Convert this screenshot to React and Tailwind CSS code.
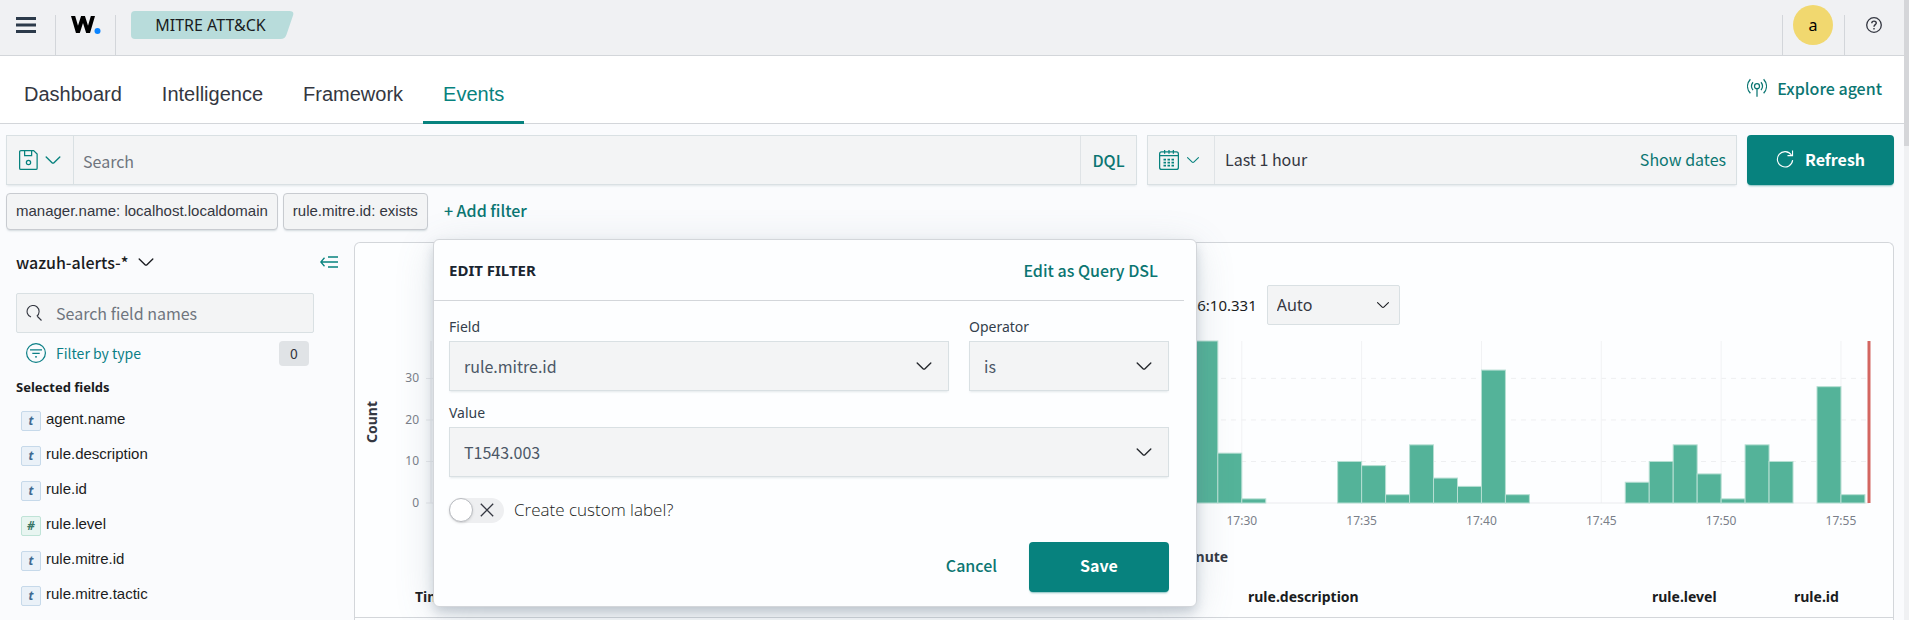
import React, { useState } from "react";

const source = "font-['Noto_Sans_CJK_SC',sans-serif]";

function Icon({ className = "size-5", children, viewBox = "0 0 16 16" }) {
  return (
    <svg viewBox={viewBox} className={`shrink-0 ${className}`} fill="none" stroke="currentColor" aria-hidden="true">
      {children}
    </svg>
  );
}

function Chevron({ className = "size-5" }) {
  return (
    <Icon className={className}>
      <path
        stroke="none"
        fill="currentColor"
        d="M13.069 5.157 8.384 9.768a.546.546 0 0 1-.768 0L2.93 5.158a.552.552 0 0 0-.771 0 .53.53 0 0 0 0 .759l4.684 4.61c.641.631 1.672.63 2.312 0l4.684-4.61a.53.53 0 0 0 0-.76.552.552 0 0 0-.771 0z"
      />
    </Icon>
  );
}

function SaveIcon() {
  return (
    <Icon>
      <path d="M1.5.5h10.2l2.8 2.8v11.2a1 1 0 0 1-1 1h-12a1 1 0 0 1-1-1v-13a1 1 0 0 1 1-1z" />
      <path d="M4.5.5v4h5.6v-4" />
      <circle cx="7.6" cy="10" r="1.7" />
    </Icon>
  );
}

function CalendarIcon() {
  return (
    <Icon>
      <rect x=".5" y="1.5" width="15" height="14" rx="1.6" />
      <path d="M.5 4.500h15M4.500 0v3M8 0v3M11.500 0v3" />
      <path strokeWidth="1.3" strokeDasharray="2 1.2" d="M3.6 7.700h9M3.600 10.100h9M3.600 12.500h9" />
    </Icon>
  );
}

function AgentIcon() {
  return (
    <Icon>
      <circle cx="8" cy="6.5" r="2" />
      <path d="M8 8.500V15" />
      <path d="M4.800 3.400c-1.500 1.900-1.500 4.400 0 6.300M11.200 3.400c1.500 1.900 1.500 4.400 0 6.300" />
      <path d="M2.700 1C-.3 4.400-.3 8.800 2.700 12.200M13.300 1c3 3.400 3 7.800 0 11.200" />
    </Icon>
  );
}

function SelectBox({ id, value }) {
  return (
    <div className="grid items-center">
      <select
        id={id}
        defaultValue={value}
        className={`col-start-1 row-start-1 h-[50px] w-full appearance-none border border-[#d9e0e3] bg-[#f3f4f5] px-[14px] text-base text-[#4b5766] shadow-[0_2px_2px_-1px_rgba(120,140,150,0.2)] ${source}`}
      >
        <option>{value}</option>
      </select>
      <Chevron className="pointer-events-none col-start-1 row-start-1 mr-[15px] size-5 justify-self-end text-[#25282d]" />
    </div>
  );
}

const fields = [
  ["t", "agent.name"],
  ["t", "rule.description"],
  ["t", "rule.id"],
  ["#", "rule.level"],
  ["t", "rule.mitre.id"],
  ["t", "rule.mitre.tactic"],
];

const SPAN = 60;
const START = -3.83;
const TOP = 39;
const bars = [
  [28, 39], [29, 12], [30, 1], [34, 10], [35, 9], [36, 2], [37, 14], [38, 6], [39, 4], [40, 32], [41, 2],
  [46, 5], [47, 10], [48, 14], [49, 7], [50, 1], [51, 14], [52, 10], [54, 28], [55, 2],
];
const gridMinutes = [0, 5, 10, 15, 20, 25, 30, 35, 40, 45, 50, 55];
const labelMinutes = [30, 35, 40, 45, 50, 55];
const at = (m) => `${((m - START) / SPAN) * 100}%`;
const level = (v) => 162 - (v / TOP) * 162;

function Histogram() {
  return (
    <svg className="block h-[190px] w-full overflow-visible font-['Noto_Sans',sans-serif] text-xs" role="img" aria-label="Count per minute">
      {[10, 20, 30].map((v) => (
        <line key={v} x1="0" x2="100%" y1={level(v)} y2={level(v)} stroke="#eeeff1" strokeDasharray="5 5" />
      ))}
      {gridMinutes.map((m) => (
        <line key={m} x1={at(m)} x2={at(m)} y1="0" y2="162" stroke="#f1f2f4" />
      ))}
      <path d="M0 0V162M-5 162H0M-5 120.500H0M-5 79H0M-5 37.500H0" stroke="#eaebee" />
      <line x1="0" x2="100%" y1="162" y2="162" stroke="#eaebee" />
      {bars.map(([m, v]) => (
        <rect key={m} x={at(m)} y={level(v)} width={`${100 / SPAN}%`} height={162 - level(v)} fill="#54b399" stroke="#b7dfd3" />
      ))}
      <line x1="100%" x2="100%" y1="0" y2="162" stroke="#d36661" strokeWidth="3" />
      {[0, 10, 20, 30].map((v) => (
        <text key={v} x="-12" y={level(v) + 4} textAnchor="end" fill="#7a7f89">
          {v}
        </text>
      ))}
      {labelMinutes.map((m) => (
        <text key={m} x={at(m)} y="184" textAnchor="middle" fill="#7a7f89">
          {`17:${m}`}
        </text>
      ))}
    </svg>
  );
}

function Header() {
  return (
    <header className="flex h-14 items-stretch border-b border-[#d3d6da] bg-[#f0f1f3]">
      <button aria-label="Menu" className="flex w-[55px] items-start pt-[17px] pl-4 text-[#2c3a4a]">
        <svg viewBox="0 0 20 16" className="h-4 w-5" fill="currentColor" aria-hidden="true">
          <path d="M0 0h20v3H0zM0 6.500h20v3H0zM0 13h20v3H0z" />
        </svg>
      </button>
      <a href="#home" aria-label="Wazuh" className="mt-[15px] flex w-[61px] items-start border-x border-[#d3d6da] pl-[15px]">
        <svg viewBox="0 0 31 20" className="h-5 w-[31px]" aria-hidden="true">
          <svg x="0" y="1" width="26" height="17" viewBox="0 1 26 17">
            <path fill="none" stroke="#000" strokeWidth="4" strokeLinejoin="bevel" d="M1.500-1 6.900 17.500 12 1.500 17.100 17.500 22.500-1" />
          </svg>
          <circle cx="26.500" cy="16" r="3" fill="#0a84ff" />
        </svg>
      </a>
      <div className="mt-[11px] ml-[15px] grid h-7 w-[163px] items-center justify-items-center self-start">
        <svg viewBox="0 0 164 28" preserveAspectRatio="none" className="col-start-1 row-start-1 h-7 w-full" fill="#b8dcdb" aria-hidden="true">
          <path d="M4 0h155.500q5 0 3.500 4.500L156.500 23.500Q155 28 150.500 28H4Q0 28 0 24V4Q0 0 4 0z" />
        </svg>
        <span className="col-start-1 row-start-1 pr-1 text-base leading-5 text-[#1a1c21]">MITRE ATT&amp;CK</span>
      </div>
      <div className="mt-[15px] ml-auto flex border-l border-[#d3d6da]">
        <button className="-mt-[10px] mr-[11px] ml-[10px] size-10 rounded-full bg-[#f1d86f] text-base leading-10 text-black">a</button>
      </div>
      <button aria-label="Help" className="mt-[15px] flex w-[60px] justify-center border-l border-[#d3d6da] pt-[2px] pr-[2px] text-[#343741]">
        <Icon className="size-4">
          <circle cx="8" cy="8" r="7.300" strokeWidth="1.300" />
          <path strokeWidth="1.400" d="M5.800 6.300C5.800 3.500 10.300 3.500 10.300 6.100 10.300 7.600 8 7.700 8 9.700M8 10.900v1.600" />
        </Icon>
      </button>
    </header>
  );
}

function Tabs() {
  const tab = "h-[68px] px-5 pb-1 pt-3 text-xl";
  return (
    <nav className="flex h-[68px] items-stretch justify-between border-b border-[#d3d6da] bg-white pr-[22px] pl-1">
      <div className="flex font-['Liberation_Sans',sans-serif] text-[#343741]">
        <button className={tab}>Dashboard</button>
        <button className={tab}>Intelligence</button>
        <button className={tab}>Framework</button>
        <button className="h-[68px] border-b-[3px] border-[#07827e] px-5 pt-3 pb-px text-xl text-[#07827e]">Events</button>
      </div>
      <button className={`mt-4 flex h-8 items-center gap-[10px] text-base font-medium text-[#0b7672] ${source}`}>
        <AgentIcon />
        Explore agent
      </button>
    </nav>
  );
}

function QueryBar() {
  const box = "flex h-[50px] border border-[#d9e0e3] bg-[#f3f4f5] shadow-[0_2px_2px_-1px_rgba(120,140,150,0.2)]";
  return (
    <div className={`flex gap-[10px] pt-[11px] pr-[10px] pl-[6px] text-base ${source}`}>
      <div className={`${box} flex-1`}>
        <button aria-label="Saved queries" className="flex w-[67px] items-center gap-1 border-r border-[#d9e0e3] pl-3 text-[#07827e]">
          <SaveIcon />
          <Chevron />
        </button>
        <input aria-label="Search" placeholder="Search" className="min-w-0 flex-1 pt-[2px] pl-[9px] placeholder:text-[#6f757e]" />
        <button className="w-[56px] border-l border-[#dfe3e6] pb-px font-medium text-[#0b7672]">DQL</button>
      </div>
      <div className={`${box} w-[590px]`}>
        <button aria-label="Quick dates" className="flex w-[67px] items-center gap-[6px] border-r border-[#dfe3e6] pl-[11px] text-[#07827e]">
          <CalendarIcon />
          <Chevron className="size-4" />
        </button>
        <button className="flex-1 pb-[3px] pl-[10px] text-left text-[#343741]">Last 1 hour</button>
        <button className="px-[10px] pb-[3px] text-[#0b7672]">Show dates</button>
      </div>
      <button className="flex h-[50px] w-[147px] items-center justify-center gap-[11px] rounded bg-[#07827e] pb-[3px] font-bold text-white shadow-[0_2px_2px_-1px_rgba(7,130,126,0.5)]">
        <Icon className="size-[18px]">
          <path d="M13.700 4.500A6.800 6.800 0 1 0 14.800 9M14.700.5V5h-4.500" />
        </Icon>
        Refresh
      </button>
    </div>
  );
}

function Filters() {
  const pill =
    "h-[37px] rounded-sm border border-[#c8cbd0] bg-[#f3f4f5] px-[9px] font-['Liberation_Sans',sans-serif] text-[15px] text-[#343741] shadow-[0_2px_2px_-1px_rgba(120,140,150,0.3)]";
  return (
    <div className="flex gap-[5px] pt-2 pl-[6px]">
      <button className={pill}>manager.name: localhost.localdomain</button>
      <button className={pill}>rule.mitre.id: exists</button>
      <button className={`ml-[11px] pb-1 text-base font-medium text-[#0b7672] ${source}`}>+ Add filter</button>
    </div>
  );
}

function Sidebar() {
  return (
    <aside className="w-[354px] shrink-0 pl-4">
      <div className="flex h-16 items-center justify-between pr-4">
        <button className={`flex items-center gap-[7px] text-base font-medium text-[#1a1c21] ${source}`}>
          wazuh-alerts-*
          <Chevron />
        </button>
        <button aria-label="Collapse sidebar" className="text-[#07827e]">
          <svg viewBox="0 0 18 12" className="h-3 w-[18px]" fill="none" stroke="currentColor" strokeWidth="1.300" aria-hidden="true">
            <path d="M8 1h10M.8 6H18M8 11h10M4.500 1.800.8 6l3.700 4.200" />
          </svg>
        </button>
      </div>
      <div className="-mt-px flex h-10 w-[298px] items-center rounded-xs border border-[#d9e0e3] bg-[#f3f4f5] pl-[9px] text-[#343741]">
        <Icon className="size-4">
          <path strokeWidth="1.100" d="M5 12.100A6 6 0 1 1 10.800 11.200M11.500 11.500l4 4" />
        </Icon>
        <input aria-label="Search field names" placeholder="Search field names" className={`ml-[14px] min-w-0 flex-1 text-base placeholder:text-[#6f757e] ${source}`} />
      </div>
      <button className={`flex h-10 w-[293px] items-center pl-[10px] text-sm text-[#0b7f86] ${source}`}>
        <Icon viewBox="0 0 20 20">
          <circle cx="10" cy="10" r="9.400" strokeWidth="1.200" />
          <path strokeWidth="1.300" d="M4 6.800h12M6.300 10.300h7.400M9 13.800h2" />
        </Icon>
        <span className="ml-[10px]">Filter by type</span>
        <span className="ml-auto flex h-[25px] w-[30px] items-center justify-center rounded bg-[#e0e3e6] text-sm text-[#343741]">0</span>
      </button>
      <h3 className="pt-[2px] text-[13px] leading-6 font-bold text-[#1a1c21]">Selected fields</h3>
      <ul className="mt-[3px]">
        {fields.map(([type, name]) => (
          <li key={name} className="flex h-[35px] items-center pl-[5px]">
            <span
              className={
                type === "t"
                  ? "mt-[2px] flex size-5 items-center justify-center rounded-xs border border-[#c6d9ea] bg-[#eaf1f8] text-xs font-bold text-[#3f6a92] italic"
                  : "mt-[2px] flex size-5 items-center justify-center rounded-xs border border-[#bfe3d7] bg-[#e8f5f1] text-xs font-bold text-[#387765] italic"
              }
            >
              {type}
            </span>
            <button className="ml-[5px] font-['Liberation_Sans',sans-serif] text-[15px] text-[#1a1c21]">{name}</button>
          </li>
        ))}
      </ul>
    </aside>
  );
}

function Results() {
  return (
    <section className="mt-3 mr-[10px] min-w-0 flex-1 overflow-hidden rounded-t-md border border-b-0 border-[#d3d6da] bg-[#fdfeff]">
      <div className="flex items-center justify-center gap-[10px] pt-[42px] pl-[6px] text-[15px] text-[#1a1c21]">
        <span>May 7, 2024 @ 16:56:10.331 - May 7, 2024 @ 17:56:10.331</span>
        <div className="grid items-center">
          <select aria-label="Interval" defaultValue="Auto" className="col-start-1 row-start-1 h-10 w-[133px] appearance-none rounded-xs border border-[#d9e0e3] bg-[#f3f4f5] pl-[9px] text-base text-[#343741]">
            <option>Auto</option>
          </select>
          <Chevron className="pointer-events-none col-start-1 row-start-1 mr-[9px] size-4 justify-self-end" />
        </div>
      </div>
      <div className="flex pt-4 pr-6">
        <div className="flex w-[76px] shrink-0 items-center pb-7 pl-[7px]">
          <span className="rotate-180 text-sm leading-5 font-bold text-[#343741] [writing-mode:vertical-rl]">Count</span>
        </div>
        <div className="min-w-0 flex-1">
          <Histogram />
        </div>
      </div>
      <p className="pt-[14px] pl-[51px] text-center text-sm leading-6 font-bold text-[#343741]">timestamp per minute</p>
      <table className="mt-[3px] w-full table-fixed border-b border-[#d3d6da] text-left text-sm text-[#1a1c21]">
        <thead>
          <tr className="h-[45px]">
            <th className="w-[893px] pt-[5px] pl-[60px]">Time</th>
            <th className="pt-[5px]">rule.description</th>
            <th className="w-[142px] pt-[5px]">rule.level</th>
            <th className="w-[99px] pt-[5px]">rule.id</th>
          </tr>
        </thead>
      </table>
    </section>
  );
}

function FilterDialog() {
  const [custom, setCustom] = useState(false);
  return (
    <div
      role="dialog"
      aria-label="Edit filter"
      className="absolute top-[10px] left-[433px] w-[764px] rounded-md border border-[#d3d6da] bg-[#fdfeff] pb-[14px] shadow-[0_6px_12px_-1px_rgba(90,110,130,0.3),0_8px_40px_-2px_rgba(90,110,130,0.2)]"
    >
      <div className="mr-3 flex h-[61px] items-center justify-between border-b border-[#d3d6da] pr-[26px] pl-[15px]">
        <h2 className="text-[15px] font-bold text-[#1a2530] uppercase">Edit filter</h2>
        <button className={`text-base font-medium text-[#0b7672] ${source}`}>Edit as Query DSL</button>
      </div>
      <div className="pt-4 pr-[27px] pl-[15px] text-sm text-[#343f4c]">
        <div className="flex gap-5">
          <div className="flex-1">
            <label htmlFor="field" className="block h-6 leading-5">Field</label>
            <SelectBox id="field" value="rule.mitre.id" />
          </div>
          <div className="w-[200px]">
            <label htmlFor="operator" className="block h-6 leading-5">Operator</label>
            <SelectBox id="operator" value="is" />
          </div>
        </div>
        <label htmlFor="value" className="mt-3 block h-6 leading-5">Value</label>
        <SelectBox id="value" value="T1543.003" />
        <div className="mt-[18px] flex items-center gap-[10px]">
          <label className="grid h-[25px] w-[55px] cursor-pointer items-center rounded-full bg-[#eeeff1]">
            <input
              id="custom"
              type="checkbox"
              role="switch"
              aria-label="Create custom label?"
              checked={custom}
              onChange={() => setCustom(!custom)}
              className="peer col-start-1 row-start-1 size-full appearance-none rounded-full"
            />
            <span className="col-start-1 row-start-1 size-6 rounded-full border border-[#b9bcc1] bg-white shadow-sm peer-checked:justify-self-end" />
            <Icon viewBox="0 0 14 14" className="col-start-1 row-start-1 mr-[10px] size-[14px] justify-self-end text-[#343741]">
              <path strokeWidth="1.300" d="M.8.8l12.400 12.400M13.200.8.8 13.200" />
            </Icon>
          </label>
          <label htmlFor="custom" className="font-['Open_Sans',sans-serif] text-[17px] leading-[30px] font-light text-[#1a1c21]">Create custom label?</label>
        </div>
        <div className={`mt-[17px] flex justify-end gap-8 text-base ${source}`}>
          <button className="pb-1 font-medium text-[#0b7672]">Cancel</button>
          <button className="h-[50px] w-[140px] rounded bg-[#07827e] pb-1 font-bold text-white shadow-[0_2px_2px_-1px_rgba(7,130,126,0.5)]">Save</button>
        </div>
      </div>
    </div>
  );
}

export default function App() {
  return (
    <div className="flex h-screen overflow-hidden bg-[#fafbfd] font-['Noto_Sans',sans-serif]">
      <div className="flex min-w-0 flex-1 flex-col">
        <Header />
        <Tabs />
        <QueryBar />
        <Filters />
        <main className="relative -mt-px flex min-h-0 flex-1 pt-[1px]">
          <Sidebar />
          <Results />
          <FilterDialog />
        </main>
      </div>
      <div className="w-[5px] shrink-0 bg-[#f0f1f3]">
        <div className="h-[146px] bg-[#d5d6d9]" />
      </div>
    </div>
  );
}
